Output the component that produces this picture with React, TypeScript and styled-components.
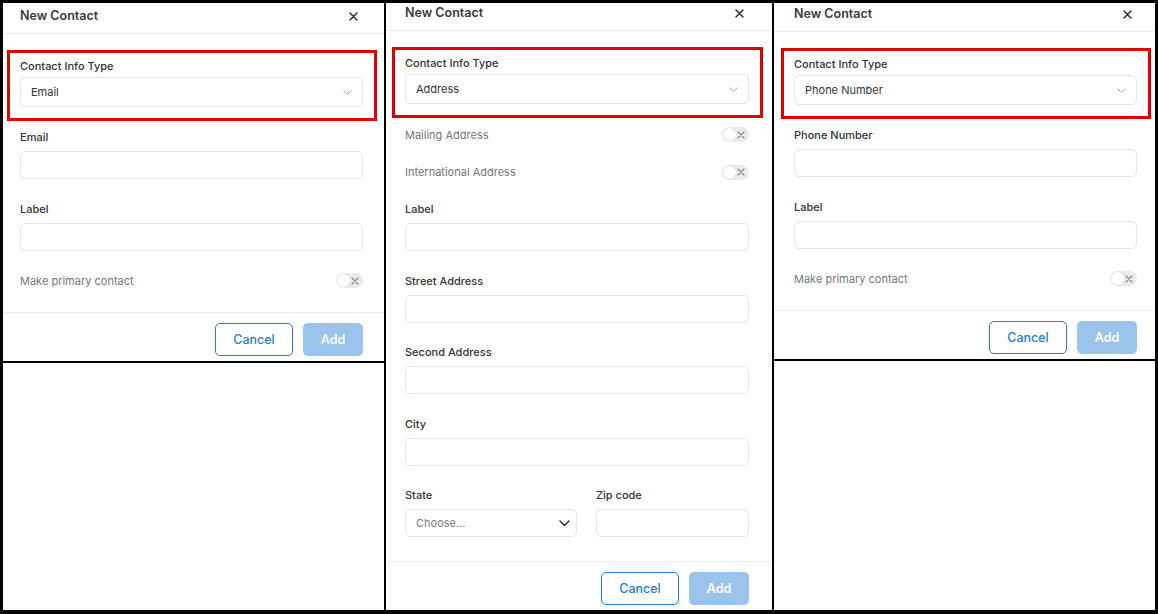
import React from "react";
import styled, { createGlobalStyle } from "styled-components";

const GlobalStyle = createGlobalStyle`
  html, body {
    margin: 0;
    padding: 0;
    background: #fff;
  }
  body {
    font-family: Inter, "Noto Sans", "Liberation Sans", sans-serif;
    color: #333;
  }
  * {
    box-sizing: border-box;
  }
`;

type PanelProps = {
  type: string;
  pl: number;
  pr: number;
  offset: number;
  grow?: boolean;
  children: React.ReactNode;
};

const CloseIcon = () => (
  <svg width="9" height="9" viewBox="0 0 9 9">
    <path d="M1 1L8 8M8 1L1 8" stroke="#333" strokeWidth="1.5" strokeLinecap="round" />
  </svg>
);

const Chevron = ({ dark }: { dark?: boolean }) =>
  dark ? (
    <svg width="11" height="7" viewBox="0 0 11 7">
      <path d="M1 1L5.5 5.5L10 1" stroke="#333" strokeWidth="1.5" fill="none" strokeLinecap="round" />
    </svg>
  ) : (
    <svg width="9" height="5" viewBox="0 0 9 5">
      <path d="M0.5 0.5L4.5 4.5L8.5 0.5" stroke="#a9a9a9" strokeWidth="1" fill="none" />
    </svg>
  );

const Switch = () => (
  <Toggle>
    <svg width="8" height="8" viewBox="0 0 8 8">
      <path d="M1 1L7 7M7 1L1 7" stroke="#8a8a8a" strokeWidth="1.2" strokeLinecap="round" />
    </svg>
  </Toggle>
);

const Panel = ({ type, pl, pr, offset, grow, children }: PanelProps) => (
  <Modal $pl={pl} $pr={pr} $offset={offset} $grow={grow}>
    <Header>
      <Title>New Contact</Title>
      <CloseBtn>
        <CloseIcon />
      </CloseBtn>
    </Header>
    <Body>
      <Highlight>
        <Label>Contact Info Type</Label>
        <Select>
          <span>{type}</span>
          <Chevron />
        </Select>
      </Highlight>
      <Fields>{children}</Fields>
    </Body>
    <Footer>
      <CancelButton>Cancel</CancelButton>
      <AddButton>Add</AddButton>
    </Footer>
  </Modal>
);

const TextField = ({ label }: { label: string }) => (
  <Field>
    <Label>{label}</Label>
    <Input />
  </Field>
);

const ToggleField = ({ label }: { label: string }) => (
  <ToggleRow>
    <MutedLabel>{label}</MutedLabel>
    <Switch />
  </ToggleRow>
);

const App = () => {
  return (
    <>
      <GlobalStyle />
      <Frame>
        <Column>
          <Panel type="Email" pl={17} pr={21} offset={3}>
            <TextField label="Email" />
            <TextField label="Label" />
            <ToggleField label="Make primary contact" />
          </Panel>
          <Filler />
        </Column>
        <Column>
          <Panel type="Address" pl={19} pr={23} offset={0} grow>
            <ToggleField label="Mailing Address" />
            <ToggleField label="International Address" />
            <TextField label="Label" />
            <TextField label="Street Address" />
            <TextField label="Second Address" />
            <TextField label="City" />
            <SplitRow>
              <Field>
                <Label>State</Label>
                <Select $muted>
                  <span>Choose...</span>
                  <Chevron dark />
                </Select>
              </Field>
              <TextField label="Zip code" />
            </SplitRow>
          </Panel>
        </Column>
        <Column>
          <Panel type="Phone Number" pl={20} pr={18} offset={1}>
            <TextField label="Phone Number" />
            <TextField label="Label" />
            <ToggleField label="Make primary contact" />
          </Panel>
          <Filler />
        </Column>
      </Frame>
    </>
  );
};

const Frame = styled.div`
  width: 1158px;
  height: 614px;
  background: #000;
  padding: 3px 3px 4px;
  display: grid;
  grid-template-columns: 381px 386px 381px;
  column-gap: 2px;
`;

const Column = styled.div`
  display: flex;
  flex-direction: column;
  gap: 2px;
  min-height: 0;
`;

const Filler = styled.div`
  flex: 1;
  background: #fff;
`;

const Modal = styled.div<{ $pl: number; $pr: number; $offset: number; $grow?: boolean }>`
  --pl: ${(p) => p.$pl}px;
  --pr: ${(p) => p.$pr}px;
  display: flex;
  flex-direction: column;
  flex: ${(p) => (p.$grow ? 1 : "none")};
  padding-top: ${(p) => p.$offset}px;
  background: #fff;
`;

const Header = styled.div`
  height: 28px;
  display: flex;
  align-items: flex-start;
  justify-content: space-between;
  padding: 3px var(--pr) 0 var(--pl);
  border-bottom: 1px solid #ececec;
`;

const Title = styled.div`
  font-size: 12.5px;
  line-height: 14px;
  font-weight: 600;
  color: #3a3a3a;
`;

const CloseBtn = styled.div`
  height: 14px;
  display: flex;
  align-items: center;
  margin-right: 5px;
`;

const Body = styled.div`
  display: flex;
  flex-direction: column;
  padding: 16px var(--pr) 24px var(--pl);
`;

const Highlight = styled.div`
  display: flex;
  flex-direction: column;
  gap: 4px;
  border: 3px solid #e00000;
  padding: 6px 11px 11px 10px;
  margin: 0 -14px 0 -13px;
`;

const Fields = styled.div`
  display: flex;
  flex-direction: column;
  gap: 22.5px;
  margin-top: 9px;
`;

const Field = styled.div`
  display: flex;
  flex-direction: column;
  gap: 7px;
  min-width: 0;
`;

const Label = styled.div`
  font-size: 11px;
  line-height: 14px;
  font-weight: 500;
  color: #333;
`;

const MutedLabel = styled.div`
  font-size: 11px;
  line-height: 14px;
  color: #727880;
`;

const Select = styled.div<{ $muted?: boolean }>`
  height: ${(p) => (p.$muted ? 28 : 30)}px;
  display: flex;
  align-items: center;
  justify-content: space-between;
  padding: 0 ${(p) => (p.$muted ? 6 : 10)}px 0 10px;
  border: 1px solid #e3e5e9;
  border-radius: 5px;
  font-size: 11px;
  color: ${(p) => (p.$muted ? "#777b80" : "#333")};
`;

const Input = styled.div`
  height: 28px;
  border: 1px solid #e3e5e9;
  border-radius: 5px;
  background: #fff;
`;

const ToggleRow = styled.div`
  height: 15px;
  display: flex;
  align-items: center;
  justify-content: space-between;
`;

const Toggle = styled.span`
  position: relative;
  width: 27px;
  height: 15px;
  border-radius: 8px;
  background: #ebebec;
  display: flex;
  align-items: center;
  justify-content: flex-end;
  padding-right: 4px;

  &::before {
    content: "";
    position: absolute;
    left: 1px;
    top: 1px;
    width: 13px;
    height: 13px;
    border-radius: 50%;
    background: #fff;
    box-shadow: 0 0 1px rgba(0, 0, 0, 0.2);
  }
`;

const SplitRow = styled.div`
  display: grid;
  grid-template-columns: 172px 1fr;
  column-gap: 19px;
`;

const Footer = styled.div`
  display: flex;
  justify-content: flex-end;
  gap: 10px;
  padding: 10px var(--pr) 5px var(--pl);
  border-top: 1px solid #edf0f3;
`;

const CancelButton = styled.button`
  width: 78px;
  height: 33px;
  border: 1.5px solid #2a7ad8;
  border-radius: 5px;
  background: #fff;
  color: #2a7ad8;
  font-family: inherit;
  font-size: 12.5px;
  font-weight: 500;
  padding: 0;
`;

const AddButton = styled.button`
  width: 60px;
  height: 33px;
  border: none;
  border-radius: 5px;
  background: #9bc3eb;
  color: #fff;
  font-family: inherit;
  font-size: 12.5px;
  font-weight: 600;
  padding: 0;
`;

export default App;
